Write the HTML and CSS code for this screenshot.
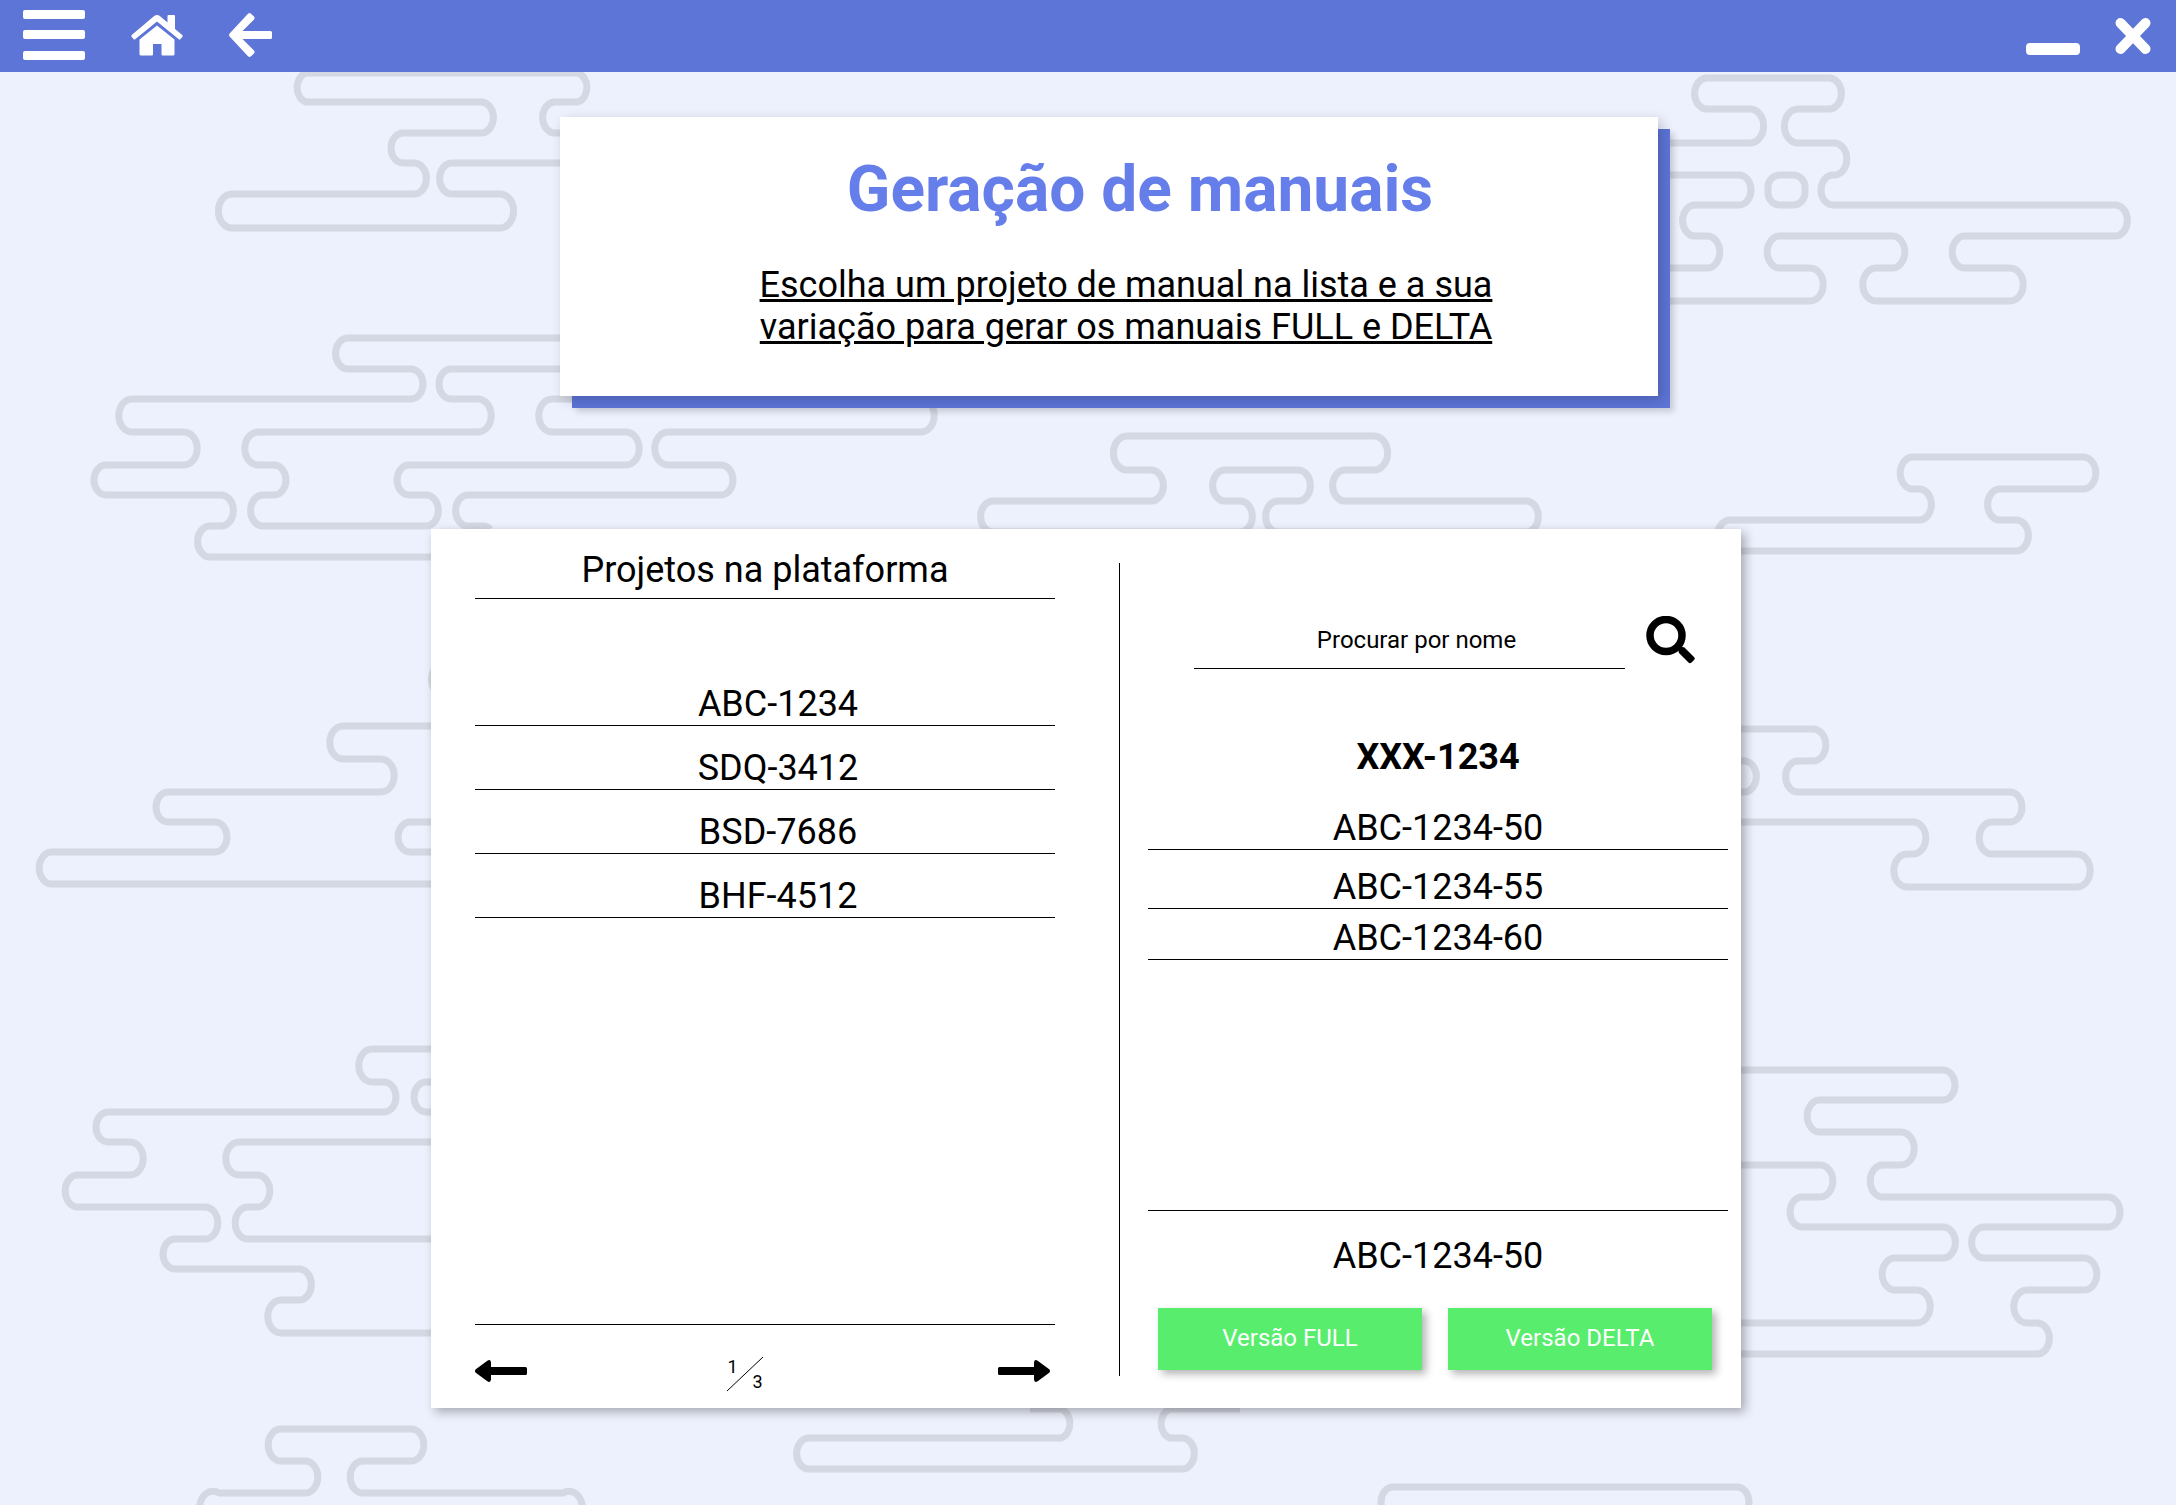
FILE: index.html
```html
<!DOCTYPE html>
<html lang="pt-BR">
<head>
<meta charset="utf-8">
<meta name="viewport" content="width=device-width, initial-scale=1">
<title>Geração de manuais</title>
<link rel="stylesheet" href="styles.css">
</head>
<body>
<svg class="clouds" viewBox="0 0 2176 1505" preserveAspectRatio="xMidYMin slice" aria-hidden="true">
  <!-- top left -->
  <path d="M600 133H555a12 15 0 0 1 0-31H578a12 15 0 0 0 0-29H306a12 15 0 0 0 0 29H481a12 15 0 0 1 0 31H403a12 15 0 0 0 0 30H414a12 15 0 0 1 0 31H232a12 15 0 0 0 0 34H500a12 15 0 0 0 0-34H452a12 15 0 0 1 0-31H600"/>
  <!-- left, behind the title card -->
  <path d="M600 338H348a12 15 0 0 0 0 31H411a12 15 0 0 1 0 30H132a12 15 0 0 0 0 33H184a12 15 0 0 1 0 33H106a12 15 0 0 0 0 30H221a12 15 0 0 1 0 31H210a12 15 0 0 0 0 31H500"/>
  <path d="M600 369H451a12 15 0 0 0 0 30H478a12 15 0 0 1 0 33H258a12 15 0 0 0 0 33H274a12 15 0 0 1 0 30H263a12 15 0 0 0 0 31H426a12 15 0 0 0 0-31H409a12 15 0 0 1 0-30H626a12 15 0 0 0 0-33H552a12 15 0 0 1 0-33H600"/>
  <path d="M490 529Q488 526 482 526H468a12 15 0 0 1 0-31H721a12 15 0 0 0 0-30H668a12 15 0 0 1 0-33H921a12 15 0 0 0 0-33H880"/>
  <!-- centre -->
  <path d="M1127 436H1374a12 15 0 0 1 0 34H1345a12 15 0 0 0 0 31H1526a12 15 0 0 1 0 31H1278a12 15 0 0 1 0-31H1298a12 15 0 0 0 0-31H1225a12 15 0 0 0 0 31H1240a12 15 0 0 1 0 31H993a12 15 0 0 1 0-31H1151a12 15 0 0 0 0-31H1127a12 15 0 0 1 0-34"/>
  <!-- left, middle -->
  <path d="M460 726H343a12 15 0 0 0 0 33H381a12 15 0 0 1 0 33H168a12 15 0 0 0 0 30H215a12 15 0 0 1 0 30H52a12 15 0 0 0 0 32H460M460 822H410a12 15 0 0 0 0 30H460M444 664a12 15 0 0 0 0 31"/>
  <!-- left, lower -->
  <path d="M460 1049H372a12 15 0 0 0 0 33H384a12 15 0 0 1 0 30H108a12 15 0 0 0 0 30H130a12 15 0 0 1 0 33H78a12 15 0 0 0 0 32H205a12 15 0 0 1 0 32H175a12 15 0 0 0 0 30H299a12 15 0 0 1 0 31H281a12 15 0 0 0 0 33H460"/>
  <path d="M460 1082H426a12 15 0 0 0 0 30H460M460 1142H239a12 15 0 0 0 0 33H257a12 15 0 0 1 0 32H248a12 15 0 0 0 0 32H460"/>
  <!-- bottom edge -->
  <path d="M207 1523a12 15 0 0 1 12-30H305a12 15 0 0 0 0-32H281a12 15 0 0 1 0-32H411a12 15 0 0 1 0 32H363a12 15 0 0 0 0 32H563a12 15 0 0 1 12 30"/>
  <path d="M1030 1409H1061a12 15 0 0 1 0 29H809a12 15 0 0 0 0 31H1182a12 15 0 0 0 0-31H1170a12 15 0 0 1 0-29H1240"/>
  <path d="M1393 1517a12 15 0 0 1 0-30H1737a12 15 0 0 1 0 30"/>
  <!-- top right -->
  <path d="M1640 143H1750a12 15 0 0 0 0-34H1707a12 15 0 0 1 0-31H1829a12 15 0 0 1 0 31H1798a12 15 0 0 0 0 34H1834a12 15 0 0 1 0 32H1833a12 15 0 0 0 0 30H2115a12 15 0 0 1 0 31H1965a12 15 0 0 0 0 32H2010a12 15 0 0 1 0 33H1876a12 15 0 0 1 0-33H1892a12 15 0 0 0 0-32H1780a12 15 0 0 0 0 32H1810a12 15 0 0 1 0 33H1640"/>
  <path d="M1640 175H1739a12 15 0 0 1 0 30H1695a12 15 0 0 0 0 31H1707a12 15 0 0 1 0 32H1640"/>
  <rect x="1768" y="175" width="37" height="30" rx="12"/>
  <!-- right, behind the panel corner -->
  <path d="M1730 551H2016a12 15 0 0 0 0-31H2000a12 15 0 0 1 0-31H2083a12 15 0 0 0 0-32H1913a12 15 0 0 0 0 32H1919a12 15 0 0 1 0 31H1730a12 15 0 0 0 0 31"/>
  <!-- right, middle -->
  <path d="M1720 729H1813a12 15 0 0 1 0 32H1798a12 15 0 0 0 0 31H2010a12 15 0 0 1 0 30H1992a12 15 0 0 0 0 32H2077a12 15 0 0 1 0 33H1907a12 15 0 0 1 0-33H1913a12 15 0 0 0 0-32H1720M1720 761H1744a12 15 0 0 1 0 31H1720"/>
  <!-- right, lower -->
  <path d="M1720 1070H1943a12 15 0 0 1 0 30H1820a12 15 0 0 0 0 32H1901a12 15 0 0 1 0 33H1883a12 15 0 0 0 0 32H2108a12 15 0 0 1 0 30H1984a12 15 0 0 0 0 31H2084a12 15 0 0 1 0 32H2027a12 15 0 0 0 0 33H2037a12 15 0 0 1 0 31H1720"/>
  <path d="M1720 1165H1820a12 15 0 0 1 0 32H1802a12 15 0 0 0 0 30H1943a12 15 0 0 1 0 31H1895a12 15 0 0 0 0 32H1917a12 15 0 0 1 0 33H1720"/>
</svg>

<header class="topbar">
  <button class="icon-button" type="button" aria-label="Menu">
    <svg width="62" height="50" viewBox="0 0 62 50"><rect width="62" height="9" rx="2"/><rect y="20" width="62" height="9" rx="2"/><rect y="41" width="62" height="9" rx="2"/></svg>
  </button>
  <a class="icon-button" href="#inicio" aria-label="Início">
    <svg width="52" height="42" viewBox="0 0 52 42"><path d="M23.500 1.800Q26 0 28.500 1.800L36.500 8.500V2Q36.500 1 37.500 1H43Q44 1 44 2V15L51.300 21Q52 22 51.300 23L49.500 25Q48.500 26 47.500 25L26 7.500 4.500 25Q3.500 26 2.500 25L.7 23Q0 22 .7 21Z"/><path d="M26 11.500L43.500 25.500V40Q43.500 41.500 42 41.500H31.500Q30.500 41.500 30.500 40.500V30H22V40.500Q22 41.500 21 41.500H10Q8.500 41.500 8.500 40V25.500Z"/></svg>
  </a>
  <button class="icon-button" type="button" aria-label="Voltar">
    <svg width="43" height="44" viewBox="0 0 43 44"><path d="M.6 20.500L19 .8Q20.500-.6 22 .8L25 3.500Q26.200 5 25 6.500L13.500 18H41.500Q43 18 43 19.500V24.500Q43 26 41.500 26H13.500L25 37.500Q26.200 39 25 40.500L22 43.200Q20.500 44.600 19 43.200L.6 23.500Q-.5 22 .6 20.500Z"/></svg>
  </button>
  <div class="window-controls">
    <button class="icon-button" type="button" aria-label="Minimizar">
      <svg width="54" height="38" viewBox="0 0 54 38"><rect y="26" width="54" height="12" rx="4"/></svg>
    </button>
    <button class="icon-button" type="button" aria-label="Fechar">
      <svg width="36" height="38" viewBox="0 0 36 38"><path class="stroke" d="M5.500 6L30.500 32M30.500 6L5.500 32" stroke-width="10"/></svg>
    </button>
  </div>
</header>

<main class="page">
  <div class="intro">
    <section class="title-card">
      <h1 class="title">Geração de manuais</h1>
      <p class="subtitle">Escolha um projeto de manual na lista e a sua<br>variação para gerar os manuais FULL e DELTA</p>
    </section>
  </div>

  <div class="panel">
    <section class="column">
      <h2 class="column-title">Projetos na plataforma</h2>
      <ul class="projects">
        <li><button class="row" type="button">ABC-1234</button></li>
        <li><button class="row" type="button">SDQ-3412</button></li>
        <li><button class="row" type="button">BSD-7686</button></li>
        <li><button class="row" type="button">BHF-4512</button></li>
      </ul>
      <nav class="pager" aria-label="Páginas">
        <button class="icon-button" type="button" aria-label="Página anterior">
          <svg width="52" height="22" viewBox="0 0 52 22"><path d="M0 11Q0 10 .8 9.200L12 1Q15.500-1.500 16 2.500V7H50.500Q52 7 52 8.500V13.500Q52 15 50.500 15H16V19.500Q15.500 23.500 12 21L.8 12.800Q0 12 0 11Z"/></svg>
        </button>
        <span class="page-count">
          <svg class="slash" width="36" height="36" viewBox="0 0 36 36" aria-hidden="true"><path d="M0 35L36 1"/></svg>
          <span class="current">1</span><span class="total">3</span>
        </span>
        <button class="icon-button" type="button" aria-label="Próxima página">
          <svg width="52" height="22" viewBox="0 0 52 22"><path d="M52 11Q52 10 51.200 9.200L40 1Q36.500-1.500 36 2.500V7H1.500Q0 7 0 8.500V13.500Q0 15 1.500 15H36V19.500Q36.500 23.500 40 21L51.200 12.800Q52 12 52 11Z"/></svg>
        </button>
      </nav>
    </section>

    <div class="divider"></div>

    <section class="column">
      <form class="search">
        <input class="search-input" type="text" aria-label="Procurar por nome" placeholder="Procurar por nome">
        <button class="icon-button" type="submit" aria-label="Procurar">
          <svg width="49" height="48" viewBox="0 0 49 48"><circle class="stroke" cx="20" cy="19.500" r="16" stroke-width="7.500"/><path d="M32 33.500Q31.500 32 33 31L35 30.500 38.500 31.500 48 41Q49.500 42.500 48 44L45.500 46.500Q44 48 42.500 46.500L33 37Z"/></svg>
        </button>
      </form>
      <h2 class="project-name">XXX-1234</h2>
      <ul class="variations">
        <li><button class="row" type="button">ABC-1234-50</button></li>
        <li><button class="row" type="button">ABC-1234-55</button></li>
        <li><button class="row" type="button">ABC-1234-60</button></li>
      </ul>
      <div class="selection">
        <p class="selected">ABC-1234-50</p>
        <div class="actions">
          <button class="action" type="button">Versão FULL</button>
          <button class="action" type="button">Versão DELTA</button>
        </div>
      </div>
    </section>
  </div>
</main>
</body>
</html>
```
FILE: styles.css
```css
* {
  box-sizing: border-box;
}

body {
  position: relative;
  min-height: 100vh;
  margin: 0;
  overflow-x: hidden;
  background: #edf1fd;
  color: #000;
  font-family: Roboto, sans-serif;
  font-size: 36px;
  line-height: 42px;
}

h1, h2, p, ul {
  margin: 0;
  padding: 0;
}

ul {
  list-style: none;
}

button, input {
  font: inherit;
  color: inherit;
}

/* Decorative background */
.clouds {
  position: absolute;
  inset: 0;
  z-index: -1;
  width: 100%;
  height: 100%;
  fill: none;
  stroke: #d4d8e3;
  stroke-width: 7;
}

/* Top bar */
.topbar {
  display: flex;
  align-items: center;
  gap: 46px;
  height: 72px;
  padding: 0 25px 2px 23px;
  background: #5e75d8;
  color: #fff;
}

.icon-button {
  display: block;
  padding: 0;
  border: 0;
  background: none;
  color: inherit;
  cursor: pointer;
}

.icon-button svg {
  display: block;
  fill: currentColor;
}

.icon-button .stroke {
  fill: none;
  stroke: currentColor;
  stroke-linecap: round;
  stroke-linejoin: round;
}

.window-controls {
  display: flex;
  gap: 35px;
  margin-left: auto;
  padding-top: 2px;
}

.page {
  padding-right: 4px;
}

/* Title card */
.intro {
  padding: 45px 0 0 46px;
}

.title-card {
  max-width: 1098px;
  margin: 0 auto;
  padding: 35px 0 48px;
  background: #fff;
  box-shadow: 4px 4px 12px rgba(0, 0, 0, 0.2), 12px 12px 0 #5e75d8, 16px 16px 6px rgba(0, 0, 0, 0.15);
  text-align: center;
}

.title {
  padding-left: 62px;
  color: #667eea;
  font-size: 64px;
  font-weight: 700;
  line-height: 75px;
}

.subtitle {
  padding: 37px 0 0 34px;
  text-decoration: underline;
}

/* Main panel */
.panel {
  display: grid;
  grid-template-columns: 1fr auto 1fr;
  max-width: 1310px;
  min-height: 879px;
  margin: 133px auto 88px;
  padding: 0 13px 0 44px;
  background: #fff;
  box-shadow: 4px 4px 10px rgba(0, 0, 0, 0.3);
}

.divider {
  width: 1px;
  margin: 34px 28px 32px 64px;
  background: #000;
}

.column {
  display: flex;
  flex-direction: column;
}

.column-title {
  padding: 20px 0 7px;
  border-bottom: 1px solid #000;
  font-size: 36px;
  font-weight: 400;
  text-align: center;
}

.row {
  display: block;
  width: 100%;
  padding: 22px 0 0;
  border: 0;
  border-bottom: 1px solid #000;
  background: none;
  line-height: 41px;
  text-align: center;
  cursor: pointer;
}

.projects {
  padding-top: 63px;
}

.projects .row {
  padding-left: 26px;
}

.pager {
  display: flex;
  align-items: center;
  justify-content: space-between;
  height: 84px;
  margin-top: auto;
  padding: 8px 5px 0 0;
  border-top: 1px solid #000;
}

.page-count {
  position: relative;
  display: flex;
  justify-content: space-between;
  width: 36px;
  height: 36px;
  margin: 6px 36px 0 0;
  font-size: 18px;
  line-height: 21px;
}

.current {
  padding-left: 1px;
}

.total {
  align-self: flex-end;
}

.slash {
  position: absolute;
  inset: 0;
  stroke: #000;
  stroke-width: 1;
}

/* Variations column */
.search {
  display: flex;
  align-items: center;
  gap: 21px;
  padding: 82px 33px 0 46px;
}

.search-input {
  flex: 1;
  min-width: 0;
  height: 58px;
  padding: 0 0 0 14px;
  border: 0;
  border-bottom: 1px solid #000;
  background: none;
  font-size: 24px;
  text-align: center;
}

.search-input::placeholder {
  color: #000;
  opacity: 1;
}

.project-name {
  padding: 67px 0 0;
  font-size: 36px;
  font-weight: 700;
  text-align: center;
}

.variations {
  padding-top: 13px;
}

.variations .row {
  padding-top: 17px;
}

.variations li:last-child .row {
  padding-top: 9px;
}

.selection {
  margin-top: auto;
  padding-bottom: 38px;
  border-top: 1px solid #000;
  text-align: center;
}

.selected {
  padding-top: 24px;
}

.actions {
  display: flex;
  gap: 26px;
  padding: 31px 16px 0 10px;
}

.action {
  flex: 1;
  height: 62px;
  padding: 0 0 3px;
  border: 0;
  background: #58ed6d;
  box-shadow: 4px 4px 8px rgba(0, 0, 0, 0.3);
  color: #fff;
  font-size: 24px;
  cursor: pointer;
}
```
